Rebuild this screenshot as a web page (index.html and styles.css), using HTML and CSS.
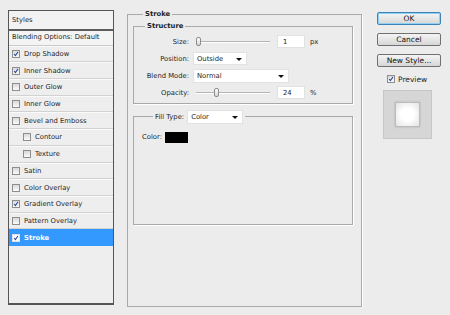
FILE: index.html
```html
<!DOCTYPE html>
<html lang="en">
<head>
  <meta charset="UTF-8">
  <title>Layer Style - Stroke</title>
  <link rel="stylesheet" href="styles.css">
</head>
<body>

<div class="dialog">
  <!-- Styles list -->
  <div class="styles-list">
    <div class="list-head">Styles</div>
    <div class="list-blend">Blending Options: Default</div>
    <div class="list-row"><span class="check on"><svg viewBox="0 0 8 8"><polyline points="1.5,4 3.2,6.2 6.6,1.4"/></svg></span>Drop Shadow</div>
    <div class="list-row"><span class="check on"><svg viewBox="0 0 8 8"><polyline points="1.5,4 3.2,6.2 6.6,1.4"/></svg></span>Inner Shadow</div>
    <div class="list-row"><span class="check"></span>Outer Glow</div>
    <div class="list-row"><span class="check"></span>Inner Glow</div>
    <div class="list-row"><span class="check"></span>Bevel and Emboss</div>
    <div class="list-row sub"><span class="check"></span>Contour</div>
    <div class="list-row sub"><span class="check"></span>Texture</div>
    <div class="list-row"><span class="check"></span>Satin</div>
    <div class="list-row"><span class="check"></span>Color Overlay</div>
    <div class="list-row"><span class="check on"><svg viewBox="0 0 8 8"><polyline points="1.5,4 3.2,6.2 6.6,1.4"/></svg></span>Gradient Overlay</div>
    <div class="list-row"><span class="check"></span>Pattern Overlay</div>
    <div class="list-row active"><span class="check on"><svg viewBox="0 0 8 8"><polyline points="1.5,4 3.2,6.2 6.6,1.4"/></svg></span>Stroke</div>
  </div>

  <!-- Stroke settings -->
  <fieldset class="group outer">
    <legend>Stroke</legend>

    <fieldset class="group structure">
      <legend>Structure</legend>
      <div class="field">
        <span class="label">Size:</span>
        <span class="slider"><span class="thumb" style="left: 0%"></span></span>
        <span class="num">1</span>
        <span class="unit">px</span>
      </div>
      <div class="field">
        <span class="label">Position:</span>
        <span class="select pos">Outside<i class="arrow"></i></span>
      </div>
      <div class="field">
        <span class="label">Blend Mode:</span>
        <span class="select blend">Normal<i class="arrow"></i></span>
      </div>
      <div class="field">
        <span class="label">Opacity:</span>
        <span class="slider"><span class="thumb" style="left: 24%"></span></span>
        <span class="num">24</span>
        <span class="unit">%</span>
      </div>
    </fieldset>

    <fieldset class="group fill">
      <legend><span class="fill-label">Fill Type:</span><span class="select kind">Color<i class="arrow"></i></span></legend>
      <div class="color-row">Color:<span class="swatch"></span></div>
    </fieldset>
  </fieldset>

  <!-- Buttons and preview -->
  <div class="actions">
    <button class="btn default">OK</button>
    <button class="btn">Cancel</button>
    <button class="btn">New Style...</button>
    <div class="preview-toggle"><span class="check on"><svg viewBox="0 0 8 8"><polyline points="1.5,4 3.2,6.2 6.6,1.4"/></svg></span>Preview</div>
    <div class="preview-box"><div class="preview-square"></div></div>
  </div>
</div>

</body>
</html>
```

FILE: styles.css
```css
body {
  margin: 0;
  background: #ececec;
  font-family: 'DejaVu Sans', sans-serif;
  font-size: 6.8px;
  color: #1e1e1e;
}

.dialog {
  display: flex;
  align-items: flex-start;
  padding-left: 8px;
}

/* left list */
.styles-list {
  box-sizing: border-box;
  width: 106px;
  height: 295px;
  margin-top: 10px;
  border: 1px solid #555;
  border-bottom-width: 2px;
  background: #eeeeee;
}

.list-head {
  height: 18px;
  line-height: 18px;
  padding-left: 3px;
  border-bottom: 2px solid #5c5c5c;
  background: #f2f2f2;
}

.list-blend {
  box-sizing: border-box;
  height: 14.7px;
  line-height: 13.7px;
  padding-left: 3px;
  border-bottom: 1px solid #c9c9c9;
  background: #f4f4f4;
}

.list-row {
  box-sizing: border-box;
  display: flex;
  align-items: center;
  gap: 4px;
  height: 16.7px;
  padding-left: 3px;
  border-top: 1px solid #fafafa;
  border-bottom: 1px solid #d2d2d2;
}

.list-row.sub {
  padding-left: 14px;
}

.list-row.active {
  background: #3399ff;
  border-color: #3399ff;
  color: #fff;
  font-weight: bold;
}

.check {
  box-sizing: border-box;
  width: 8px;
  height: 8px;
  border: 1px solid #8e8e8e;
  background: linear-gradient(#d9d9d9, #fbfbfb);
  display: inline-flex;
}

.check svg {
  width: 6px;
  height: 6px;
}

.check polyline {
  fill: none;
  stroke: #25449a;
  stroke-width: 1.4;
}

.active .check {
  background: #fff;
  border-color: #e0e0e0;
}

/* groups */
.group {
  margin: 0;
  min-inline-size: 0;
  border: 1px solid #a9a9a9;
  box-shadow: 1px 1px 0 #fff;
}

.group legend {
  padding: 0 2px;
  line-height: 9px;
  font-weight: bold;
}

.outer {
  box-sizing: border-box;
  width: 235px;
  height: 297px;
  margin: 9.5px 0 0 13px;
  padding: 3px 8px 0 5px;
}

.outer > legend {
  margin-left: 10px;
}

.structure {
  box-sizing: border-box;
  height: 82px;
  padding: 4.5px 0 0 0;
}

.structure > legend {
  margin-left: 11px;
}

.field {
  display: flex;
  align-items: center;
  height: 13px;
  margin-bottom: 4px;
}

.label {
  width: 55px;
  text-align: right;
}

.slider {
  position: relative;
  width: 74px;
  height: 9px;
  margin-left: 7px;
}

.slider::before {
  content: "";
  position: absolute;
  left: 0;
  right: 0;
  top: 4px;
  border-top: 1px solid #b4b4b4;
  border-bottom: 1px solid #fff;
}

.thumb {
  position: absolute;
  top: 0;
  box-sizing: border-box;
  width: 5px;
  height: 9px;
  border: 1px solid #8c8c8c;
  border-radius: 2px;
  background: linear-gradient(#ffffff, #d6d6d6);
}

.num {
  box-sizing: border-box;
  width: 28px;
  height: 13px;
  line-height: 12px;
  margin-left: 7px;
  padding-left: 5px;
  background: #fff;
  border: 1px solid #e1e1e1;
}

.unit {
  margin-left: 5px;
}

.select {
  position: relative;
  box-sizing: border-box;
  height: 13px;
  line-height: 12px;
  margin-left: 4px;
  padding-left: 3px;
  background: #fff;
  border: 1px solid #e2e2e2;
  font-weight: normal;
}

.select.pos {
  width: 54px;
}

.select.blend {
  width: 96px;
  height: 14px;
}

.arrow {
  position: absolute;
  right: 4px;
  top: 5px;
  border-left: 3px solid transparent;
  border-right: 3px solid transparent;
  border-top: 3px solid #111;
}

.fill {
  box-sizing: border-box;
  height: 115px;
  margin-top: 6px;
  padding: 8px 0 0 8px;
}

.fill > legend {
  display: flex;
  align-items: center;
  margin-left: 11px;
  padding: 0 2px;
  line-height: 14px;
}

.fill-label {
  font-weight: normal;
}

.select.kind {
  width: 56px;
  height: 14px;
  line-height: 13px;
  margin-left: 3px;
}

.color-row {
  display: flex;
  align-items: center;
  gap: 3px;
  height: 11px;
}

.swatch {
  width: 23px;
  height: 11px;
  background: #000;
}

/* right column */
.actions {
  display: flex;
  flex-direction: column;
  width: 64px;
  margin: 11.5px 0 0 15px;
}

.btn {
  box-sizing: border-box;
  width: 64px;
  height: 13px;
  margin: 0 0 8px;
  padding: 0;
  font-family: 'DejaVu Sans', sans-serif;
  font-size: 7.5px;
  line-height: 11px;
  color: #111;
  border: 1px solid #707070;
  border-radius: 2px;
  background: linear-gradient(#f4f4f4, #e6e6e6 50%, #d6d6d6);
}

.btn.default {
  border-color: #3c83b8;
  box-shadow: inset 0 0 0 1px #8fd0f4;
}

.preview-toggle {
  display: flex;
  align-items: center;
  gap: 3px;
  height: 9px;
  margin: 0 0 6px 10px;
  font-size: 7.5px;
}

.preview-box {
  box-sizing: border-box;
  width: 49px;
  height: 49px;
  margin-left: 6px;
  border: 1px solid #c6c6c6;
  background: #d6d6d6;
  display: flex;
  align-items: center;
  justify-content: center;
}

.preview-square {
  box-sizing: border-box;
  width: 25px;
  height: 25px;
  border: 1px solid #bcbcbc;
  background: radial-gradient(circle at 50% 50%, #ffffff 40%, #e2e2e2);
  box-shadow: 0 0 2px #b0b0b0;
}
```
